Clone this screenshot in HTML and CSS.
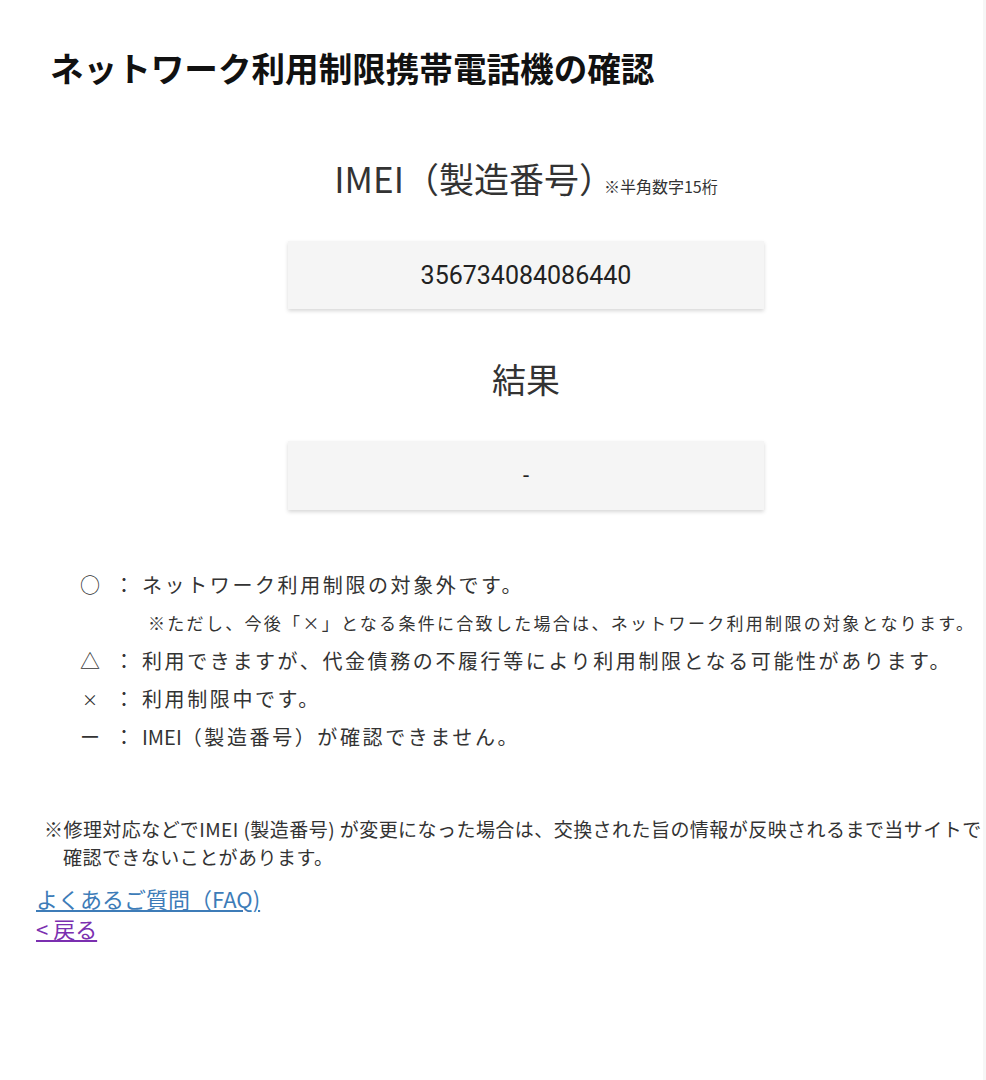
FILE: index.html
```html
<!DOCTYPE html>
<html lang="ja">
<head>
<meta charset="utf-8">
<title>ネットワーク利用制限携帯電話機の確認</title>
<link rel="stylesheet" href="styles.css">
</head>
<body>
<div class="page">
  <h1 class="title">ネットワーク利用制限携帯電話機の確認</h1>

  <div class="form">
    <h2 class="label">IMEI（製造番号）<span class="hint">※半角数字15桁</span></h2>
    <div class="field">356734084086440</div>
    <h2 class="label label-result">結果</h2>
    <div class="field field-result">-</div>
  </div>

  <div class="legend">
    <span class="sym">○</span><span class="colon">：</span><span class="desc">ネットワーク利用制限の対象外です。</span>
    <span class="desc desc-sub">※ただし、今後「×」となる条件に合致した場合は、ネットワーク利用制限の対象となります。</span>
    <span class="sym">△</span><span class="colon">：</span><span class="desc">利用できますが、代金債務の不履行等により利用制限となる可能性があります。</span>
    <span class="sym sym-x">×</span><span class="colon">：</span><span class="desc">利用制限中です。</span>
    <span class="sym">ー</span><span class="colon">：</span><span class="desc"><span class="latin">IMEI</span>（製造番号）が確認できません。</span>
  </div>

  <p class="note">※修理対応などでIMEI (製造番号) が変更になった場合は、交換された旨の情報が反映されるまで当サイトでは<br>確認できないことがあります。</p>

  <div class="links">
    <a class="link link-faq" href="#faq">よくあるご質問（FAQ)</a>
    <a class="link link-back" href="#back">&lt; 戻る</a>
  </div>
</div>
</body>
</html>
```

FILE: styles.css
```css
html, body {
  margin: 0;
  padding: 0;
  background: #ffffff;
  overflow: hidden;
}

body {
  font-family: "Noto Sans CJK JP", "Noto Sans", Roboto, sans-serif;
  color: #333333;
}

body::after {
  content: "";
  position: fixed;
  top: 0;
  right: 0;
  width: 3px;
  height: 100%;
  background: #f6f6f6;
}

.page {
  width: 1052px;
  min-height: 1080px;
  box-sizing: border-box;
  padding-top: 44px;
}

.title {
  margin: 0 0 0 50px;
  font-size: 33.6px;
  line-height: 48px;
  font-weight: 700;
  color: #111111;
}

.form {
  display: flex;
  flex-direction: column;
  align-items: center;
  margin-top: 64px;
}

.label {
  margin: 0;
  font-size: 35px;
  line-height: 44px;
  font-weight: 400;
  color: #333333;
}

.label-result {
  font-size: 34px;
}

.hint {
  font-size: 16px;
  line-height: 1;
  font-weight: 400;
  margin-left: -10px;
  color: #333333;
}

.field {
  width: 476px;
  height: 68px;
  margin: 41px 0 48px;
  background: #f5f5f5;
  box-shadow: 0 2px 4px rgba(0, 0, 0, 0.16);
  display: flex;
  align-items: center;
  justify-content: center;
  font-family: Roboto, "Noto Sans CJK JP", sans-serif;
  font-size: 25px;
  color: #222222;
}

.field-result {
  height: 69px;
  margin: 40px 0 0;
  font-size: 22px;
}

.legend {
  display: grid;
  grid-template-columns: 40px 22px auto;
  margin: 56px 0 0 80px;
  font-size: 20px;
  line-height: 38px;
  letter-spacing: 2.6px;
  color: #333333;
  white-space: nowrap;
}

.sym {
  grid-column: 1;
  letter-spacing: 0;
}

.sym-x {
  font-size: 16px;
  padding-left: 2px;
}

.colon {
  grid-column: 2;
  letter-spacing: 0;
  margin-left: -6px;
}

.desc {
  grid-column: 3;
}

.latin {
  letter-spacing: 0;
}

.desc-sub {
  font-size: 17px;
  letter-spacing: 2.3px;
  padding-left: 6px;
}

.note {
  margin: 59px 0 0 0;
  padding-left: 63px;
  text-indent: -19px;
  font-size: 19px;
  line-height: 28px;
  letter-spacing: 0.45px;
  white-space: nowrap;
  color: #333333;
}

.links {
  display: flex;
  flex-direction: column;
  align-items: flex-start;
  margin: 12px 0 0 36px;
}

.link {
  font-size: 22px;
  line-height: 30px;
  text-decoration: underline;
}

.link-faq {
  color: #3d7cb8;
}

.link-back {
  color: #7b2fb0;
}
```
